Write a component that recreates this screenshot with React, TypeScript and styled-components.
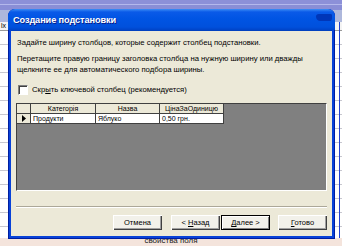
import React from "react";
import styled, { createGlobalStyle } from "styled-components";

const Global = createGlobalStyle`
  html, body { margin: 0; padding: 0; }
  body { width: 342px; height: 246px; overflow: hidden; font-family: "Liberation Sans", Arial, sans-serif; }
`;

const Desktop = styled.div`
  position: relative;
  width: 342px;
  height: 246px;
  overflow: hidden;
  background: #ffffff;
  display: flex;
  flex-direction: column;
`;

const AppTitle = styled.div`
  height: 10px;
  background: linear-gradient(#8c90d8 0 4px, #b4b8ec 4px 5px, #8a8ed6 5px);
`;

const AppToolbar = styled.div`
  height: 12px;
  background: #aeb8dc;
`;

const AppHeader = styled.div`
  height: 8px;
  display: flex;
  border-bottom: 1px solid #9a9a9a;
  background: #f4f4f4;
  font-size: 7px;
  line-height: 8px;
  color: #000;
  padding-left: 1px;
`;

const AppRows = styled.div`
  flex: 1;
  background: repeating-linear-gradient(#ffffff 0 13px, #c8c8d0 13px 14px);
`;

const AppStatus = styled.div`
  height: 8px;
  background: #f4e4dc;
  display: flex;
  justify-content: center;
  font-size: 8px;
  line-height: 6px;
  color: #222;
`;

const RightEdge = styled.div`
  position: absolute;
  right: 2px;
  top: 22px;
  bottom: 8px;
  width: 1px;
  background: #2040d0;
`;

const Dialog = styled.div`
  position: absolute;
  left: 8px;
  top: 9px;
  width: 327px;
  height: 230px;
  box-sizing: border-box;
  display: flex;
  flex-direction: column;
  background: #0842d8;
  border-radius: 7px 7px 0 0;
  padding: 0 3px 3px 3px;
  box-shadow: inset 0 0 0 1px #001ea0;
`;

const TitleBar = styled.div`
  height: 21px;
  margin: 0 -3px;
  border-radius: 7px 7px 0 0;
  background: linear-gradient(#3d8df5 0, #0a5ae8 3px, #0054e3 10px, #0050dc 18px, #0044c8 21px);
  display: flex;
  align-items: center;
  padding-left: 5px;
  position: relative;
  overflow: hidden;
`;

const TitleText = styled.span`
  color: #ffffff;
  font-weight: bold;
  font-size: 9.2px;
  letter-spacing: -0.1px;
  text-shadow: 1px 1px 0 #0a1f8a;
`;

const TitleShade = styled.div`
  position: absolute;
  right: 3px;
  top: 5px;
  width: 16px;
  height: 7px;
  background: #0036b8;
  border-radius: 4px 2px 4px 6px;
`;

const Body = styled.div`
  flex: 1;
  background: #ece9d8;
  display: flex;
  flex-direction: column;
  padding: 6px 5px 6px 5px;
  font-size: 7.7px;
  color: #000;
  border-top: 1px solid #0040c0;
  white-space: nowrap;
`;

const Para = styled.p<{ $gap?: number }>`
  margin: 0 0 ${(p) => p.$gap ?? 0}px 1px;
  line-height: 11px;
`;

const CheckRow = styled.label`
  display: flex;
  align-items: center;
  gap: 4px;
  margin: 0 0 8px 2px;
  height: 11px;
`;

const Box = styled.span`
  width: 8px;
  height: 8px;
  background: #fff;
  border-top: 1px solid #808080;
  border-left: 1px solid #808080;
  border-right: 1px solid #fff;
  border-bottom: 1px solid #fff;
  box-shadow: inset 1px 1px 0 #404040;
`;

const Grid = styled.div`
  height: 86px;
  background: #808080;
  border-top: 1px solid #404040;
  border-left: 1px solid #404040;
  border-right: 1px solid #ffffff;
  border-bottom: 1px solid #ffffff;
  display: flex;
  flex-direction: column;
`;

const GridRow = styled.div`
  display: grid;
  grid-template-columns: 14px 65px 64px 64px;
  height: 10px;
`;

const Cell = styled.div<{ $head?: boolean; $align?: string }>`
  background: ${(p) => (p.$head ? "#ece9d8" : "#ffffff")};
  border-right: 1px solid #404040;
  border-bottom: 1px solid #404040;
  font-size: 7px;
  line-height: 9px;
  padding: 0 2px;
  white-space: nowrap;
  overflow: hidden;
  display: flex;
  align-items: center;
  justify-content: ${(p) => (p.$align === "center" ? "center" : "flex-start")};
`;

const Sep = styled.div`
  margin: auto 0 7px 0;
  height: 1px;
  background: #aca899;
  border-bottom: 1px solid #ffffff;
`;

const Buttons = styled.div`
  display: flex;
  justify-content: flex-end;
`;

const Btn = styled.button<{ $def?: boolean; $ml?: number }>`
  width: 49px;
  height: 15px;
  margin-left: ${(p) => p.$ml ?? 0}px;
  box-sizing: border-box;
  background: #f2f1ea;
  font-family: "Liberation Sans", Arial, sans-serif;
  font-size: 7.5px;
  color: #000;
  padding: 0;
  border: ${(p) => (p.$def ? "1px solid #000" : "none")};
  box-shadow: ${(p) =>
    p.$def
      ? "inset 1px 1px 0 #fff, inset -1px -1px 0 #808080"
      : "inset 1px 1px 0 #fff, inset -1px -1px 0 #404040, inset -2px -2px 0 #a0a0a0"};
`;

const U = styled.span`
  text-decoration: underline;
`;

export default function App() {
  return (
    <>
      <Global />
      <Desktop>
        <AppTitle />
        <AppToolbar />
        <AppHeader>lx</AppHeader>
        <AppRows />
        <AppStatus>свойства поля</AppStatus>
        <RightEdge />
        <Dialog>
          <TitleBar>
            <TitleText>Создание подстановки</TitleText>
            <TitleShade />
          </TitleBar>
          <Body>
            <Para $gap={5}>Задайте ширину столбцов, которые содержит столбец подстановки.</Para>
            <Para>Перетащите правую границу заголовка столбца на нужную ширину или дважды</Para>
            <Para $gap={9}>щелкните ее для автоматического подбора ширины.</Para>
            <CheckRow>
              <Box />
              <span>
                Скр<U>ы</U>ть ключевой столбец (рекомендуется)
              </span>
            </CheckRow>
            <Grid>
              <GridRow>
                <Cell $head />
                <Cell $head $align="center">Категорія</Cell>
                <Cell $head $align="center">Назва</Cell>
                <Cell $head $align="center">ЦінаЗаОдиницю</Cell>
              </GridRow>
              <GridRow>
                <Cell $head $align="center">
                  <svg width="6" height="7" viewBox="0 0 6 7">
                    <path d="M1 0 L5 3.5 L1 7 Z" fill="#000" />
                  </svg>
                </Cell>
                <Cell>Продукти</Cell>
                <Cell>Яблуко</Cell>
                <Cell>0,50 грн.</Cell>
              </GridRow>
            </Grid>
            <Sep />
            <Buttons>
              <Btn>Отмена</Btn>
              <Btn $ml={9}>
                &lt; <U>Н</U>азад
              </Btn>
              <Btn $def $ml={1}>
                <U>Д</U>алее &gt;
              </Btn>
              <Btn $ml={8}>
                <U>Г</U>отово
              </Btn>
            </Buttons>
          </Body>
        </Dialog>
      </Desktop>
    </>
  );
}
